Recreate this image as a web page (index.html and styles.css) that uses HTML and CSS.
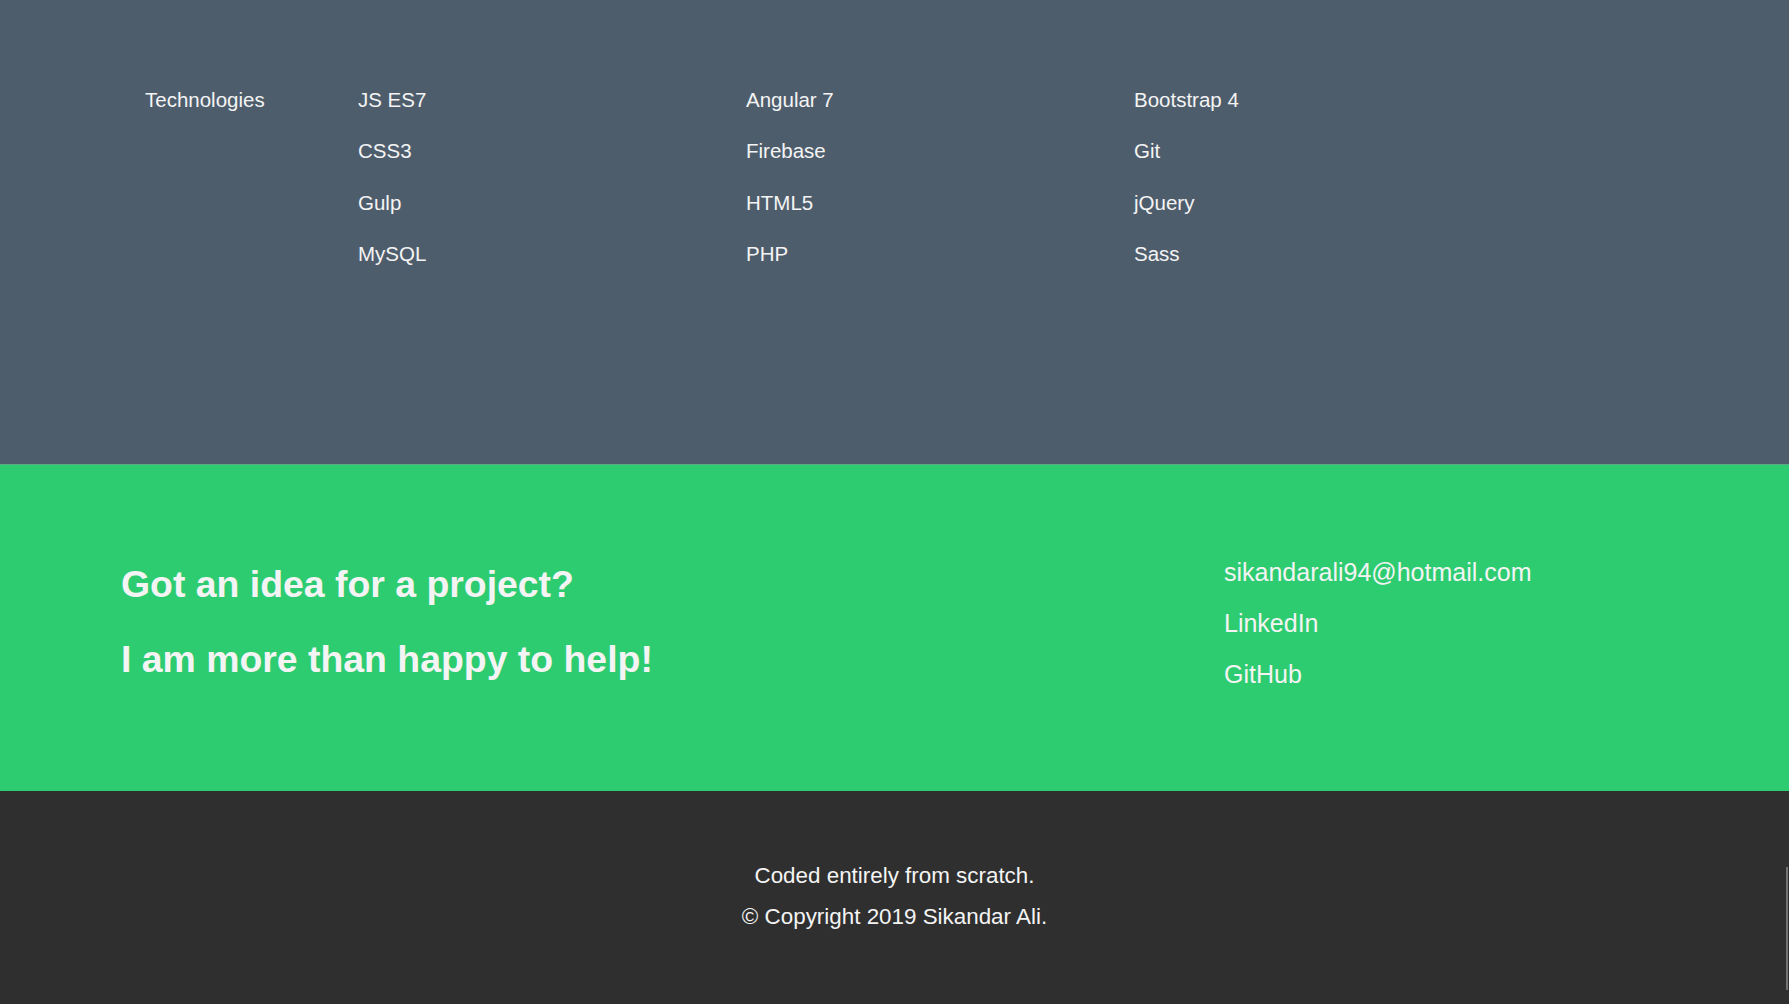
FILE: index.html
```html
<!DOCTYPE html>
<html lang="en">
<head>
<meta charset="utf-8">
<title>Sikandar Ali</title>
<link rel="stylesheet" href="styles.css">
</head>
<body>
<section class="tech">
  <div class="tech-label">Technologies</div>
  <ul class="tech-col">
    <li>JS ES7</li>
    <li>CSS3</li>
    <li>Gulp</li>
    <li>MySQL</li>
  </ul>
  <ul class="tech-col">
    <li>Angular 7</li>
    <li>Firebase</li>
    <li>HTML5</li>
    <li>PHP</li>
  </ul>
  <ul class="tech-col">
    <li>Bootstrap 4</li>
    <li>Git</li>
    <li>jQuery</li>
    <li>Sass</li>
  </ul>
</section>
<section class="contact">
  <div class="pitch">
    <h2>Got an idea for a project?</h2>
    <h2>I am more than happy to help!</h2>
  </div>
  <ul class="links">
    <li><a href="#">sikandarali94@hotmail.com</a></li>
    <li><a href="#">LinkedIn</a></li>
    <li><a href="#">GitHub</a></li>
  </ul>
</section>
<footer class="footer">
  <p>Coded entirely from scratch.</p>
  <p>&copy; Copyright 2019 Sikandar Ali.</p>
</footer>
<div class="scroll-thumb"></div>
</body>
</html>
```
FILE: styles.css
```css
html, body {
  margin: 0;
  padding: 0;
}
body {
  font-family: "Liberation Sans", Arial, sans-serif;
  color: #f4f4f4;
  background: #2f2f2f;
}
ul {
  list-style: none;
  margin: 0;
  padding: 0;
}
.tech {
  background: #4e5d6c;
  height: 464px;
  box-sizing: border-box;
  padding: 74px 0 0 145px;
  display: flex;
  align-items: flex-start;
  font-size: 20.5px;
  line-height: 51.3px;
}
.tech-label {
  width: 213px;
}
.tech-col {
  width: 388px;
}
.contact {
  background: #2ecc71;
  border-top: 1px solid #5aa884;
  height: 327px;
  box-sizing: border-box;
  padding: 82px 0 0 121px;
  display: flex;
  align-items: flex-start;
}
.pitch {
  width: 1103px;
}
.pitch h2 {
  margin: 0;
  font-size: 37.4px;
  font-weight: bold;
  line-height: 75px;
}
.links {
  font-size: 25px;
  line-height: 51px;
}
.links a {
  color: #f4f4f4;
  text-decoration: none;
}
.footer {
  background: #2f2f2f;
  height: 213px;
  box-sizing: border-box;
  padding-top: 64px;
  text-align: center;
  font-size: 22.4px;
  line-height: 41px;
}
.footer p {
  margin: 0;
}
.scroll-thumb {
  position: fixed;
  right: 1px;
  top: 867px;
  width: 2px;
  height: 123px;
  background: #737373;
}
```
